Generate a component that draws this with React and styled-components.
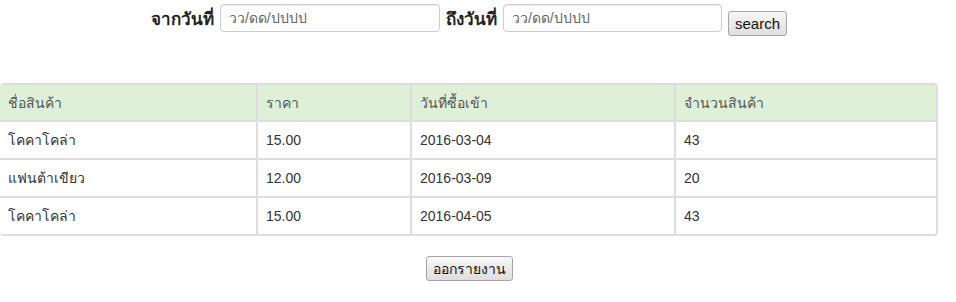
import React from 'react';
import styled, { createGlobalStyle } from 'styled-components';

const GlobalStyle = createGlobalStyle`
  body {
    margin: 0;
    background: #fff;
    font-family: 'Liberation Sans', 'Noto Sans', 'DejaVu Sans', sans-serif;
    color: #333;
  }
`;

const Page = styled.div`
  width: 938px;
  display: flex;
  flex-direction: column;
  align-items: center;
`;

const FilterBar = styled.form`
  display: flex;
  align-items: flex-start;
  gap: 6px;
  padding-top: 4px;
  height: 79px;
  box-sizing: border-box;
`;

const Label = styled.label`
  font-size: 17px;
  font-weight: bold;
  color: #222;
  line-height: 28px;
  padding-top: 2px;
`;

const DateInput = styled.input`
  width: ${p => p.$w}px;
  height: 28px;
  box-sizing: border-box;
  border: 1px solid #ccc;
  border-radius: 4px;
  padding: 0 8px;
  font-size: 14px;
  font-family: inherit;
  color: #555;
  box-shadow: inset 0 1px 1px rgba(0, 0, 0, 0.075);
  &::placeholder {
    color: #666;
  }
`;

const Button = styled.button`
  height: 25px;
  padding: 0 6px;
  margin-top: ${p => p.$top || 0}px;
  font-family: 'Liberation Sans', 'Noto Sans', sans-serif;
  font-size: ${p => p.$size || 14}px;
  color: #111;
  border: 1px solid #a5a5a5;
  border-radius: 3px;
  background: linear-gradient(#f7f7f7, #dedede);
  cursor: pointer;
`;

const TableWrap = styled.div`
  width: 938px;
  border: 2px solid #ddd;
  border-left: none;
  border-radius: 4px;
  overflow: hidden;
  box-sizing: border-box;
  margin-top: 4px;
`;

const Table = styled.table`
  width: 100%;
  table-layout: fixed;
  border-collapse: collapse;
  font-size: 14px;
`;

const HeadCell = styled.th`
  background: #dff0d8;
  text-align: left;
  font-weight: normal;
  color: #555;
  height: 36px;
  padding: 0 8px;
  width: ${p => p.$w}px;
  box-sizing: border-box;
  border-right: 2px solid #ddd;
  border-bottom: 2px solid #ddd;
  &:last-child {
    border-right: none;
  }
`;

const Cell = styled.td`
  height: 36px;
  padding: 0 8px;
  color: #333;
  border-right: 2px solid #ddd;
  border-bottom: 2px solid #ddd;
  &:last-child {
    border-right: none;
  }
  tr:last-child > & {
    border-bottom: none;
  }
`;

const Footer = styled.div`
  padding-top: 20px;
`;

const columns = [
  { title: 'ชื่อสินค้า', w: 257 },
  { title: 'ราคา', w: 154 },
  { title: 'วันที่ซื้อเข้า', w: 264 },
  { title: 'จำนวนสินค้า', w: 261 },
];

const rows = [
  ['โคคาโคล่า', '15.00', '2016-03-04', '43'],
  ['แฟนต้าเขียว', '12.00', '2016-03-09', '20'],
  ['โคคาโคล่า', '15.00', '2016-04-05', '43'],
];

export default function App() {
  return (
    <>
      <GlobalStyle />
      <Page>
        <FilterBar onSubmit={e => e.preventDefault()}>
          <Label>จากวันที่</Label>
          <DateInput $w={220} placeholder="วว/ดด/ปปปป" />
          <Label>ถึงวันที่</Label>
          <DateInput $w={219} placeholder="วว/ดด/ปปปป" />
          <Button $top={7} $size={15}>search</Button>
        </FilterBar>
        <TableWrap>
          <Table>
            <thead>
              <tr>
                {columns.map(c => (
                  <HeadCell key={c.title} $w={c.w}>{c.title}</HeadCell>
                ))}
              </tr>
            </thead>
            <tbody>
              {rows.map((r, i) => (
                <tr key={i}>
                  {r.map((v, j) => <Cell key={j}>{v}</Cell>)}
                </tr>
              ))}
            </tbody>
          </Table>
        </TableWrap>
        <Footer>
          <Button>ออกรายงาน</Button>
        </Footer>
      </Page>
    </>
  );
}
